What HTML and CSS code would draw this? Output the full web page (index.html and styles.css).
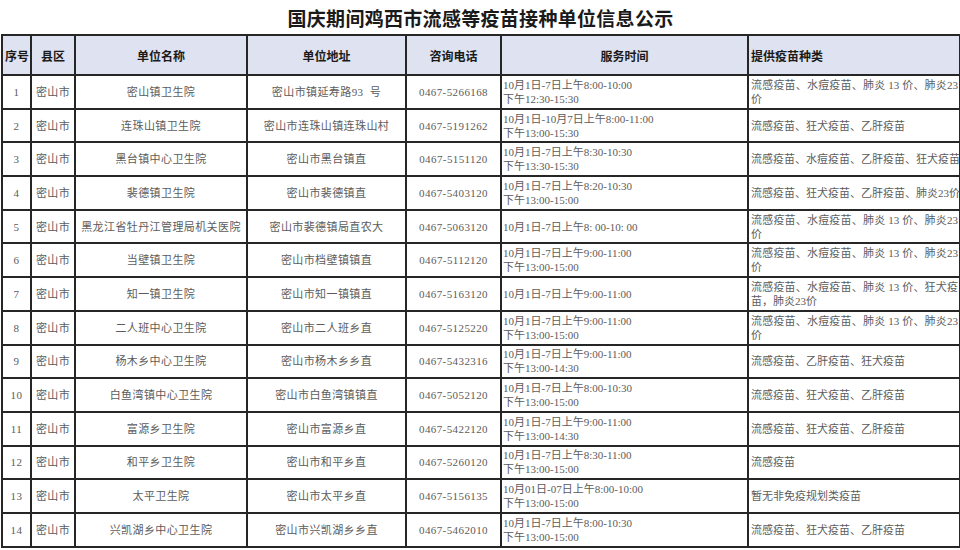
FILE: index.html
```html
<!DOCTYPE html>
<html lang="zh-CN">
<head>
<meta charset="utf-8">
<title>国庆期间鸡西市流感等疫苗接种单位信息公示</title>
<link rel="stylesheet" href="styles.css">
</head>
<body>
<div class="page">
  <h1 class="title">国庆期间鸡西市流感等疫苗接种单位信息公示</h1>
  <table class="sheet">
    <colgroup>
      <col class="c-no"><col class="c-county"><col class="c-name"><col class="c-addr"><col class="c-tel"><col class="c-time"><col class="c-vac">
    </colgroup>
    <thead>
      <tr>
        <th>序号</th><th>县区</th><th>单位名称</th><th>单位地址</th><th>咨询电话</th><th>服务时间</th><th class="left">提供疫苗种类</th>
      </tr>
    </thead>
    <tbody>
      <tr>
        <td>1</td><td>密山市</td><td>密山镇卫生院</td><td>密山市镇延寿路93&nbsp;&nbsp;号</td><td>0467-5266168</td>
        <td class="time">10月1日-7日上午8:00-10:00<br>下午12:30-15:30</td>
        <td class="vac"><span class="jl">流感疫苗、水痘疫苗、肺炎 13 价、肺炎23</span>价</td>
      </tr>
      <tr>
        <td>2</td><td>密山市</td><td>连珠山镇卫生院</td><td>密山市连珠山镇连珠山村</td><td>0467-5191262</td>
        <td class="time">10月1日-10月7日上午8:00-11:00<br>下午13:00-15:30</td>
        <td class="vac">流感疫苗、狂犬疫苗、乙肝疫苗</td>
      </tr>
      <tr>
        <td>3</td><td>密山市</td><td>黑台镇中心卫生院</td><td>密山市黑台镇直</td><td>0467-5151120</td>
        <td class="time">10月1日-7日上午8:30-10:30<br>下午13:30-15:30</td>
        <td class="vac"><span class="jl">流感疫苗、水痘疫苗、乙肝疫苗、狂犬疫苗</span></td>
      </tr>
      <tr>
        <td>4</td><td>密山市</td><td>裴德镇卫生院</td><td>密山市裴德镇直</td><td>0467-5403120</td>
        <td class="time">10月1日-7日上午8:20-10:30<br>下午13:00-15:00</td>
        <td class="vac"><span class="jl">流感疫苗、狂犬疫苗、乙肝疫苗、肺炎23价</span></td>
      </tr>
      <tr>
        <td>5</td><td>密山市</td><td>黑龙江省牡丹江管理局机关医院</td><td>密山市裴德镇局直农大</td><td>0467-5063120</td>
        <td class="time">10月1日-7日上午8:&nbsp;00-10:&nbsp;00</td>
        <td class="vac"><span class="jl">流感疫苗、水痘疫苗、肺炎 13 价、肺炎23</span>价</td>
      </tr>
      <tr>
        <td>6</td><td>密山市</td><td>当壁镇卫生院</td><td>密山市档壁镇镇直</td><td>0467-5112120</td>
        <td class="time">10月1日-7日上午9:00-11:00<br>下午13:00-15:00</td>
        <td class="vac"><span class="jl">流感疫苗、水痘疫苗、肺炎 13 价、肺炎23</span>价</td>
      </tr>
      <tr>
        <td>7</td><td>密山市</td><td>知一镇卫生院</td><td>密山市知一镇镇直</td><td>0467-5163120</td>
        <td class="time">10月1日-7日上午9:00-11:00</td>
        <td class="vac"><span class="jl">流感疫苗、水痘疫苗、肺炎 13 价、狂犬疫</span>苗，肺炎23价</td>
      </tr>
      <tr>
        <td>8</td><td>密山市</td><td>二人班中心卫生院</td><td>密山市二人班乡直</td><td>0467-5125220</td>
        <td class="time">10月1日-7日上午9:00-11:00<br>下午13:00-15:00</td>
        <td class="vac"><span class="jl">流感疫苗、水痘疫苗、肺炎 13 价、肺炎23</span>价</td>
      </tr>
      <tr>
        <td>9</td><td>密山市</td><td>杨木乡中心卫生院</td><td>密山市杨木乡乡直</td><td>0467-5432316</td>
        <td class="time">10月1日-7日上午9:00-11:00<br>下午13:00-14:30</td>
        <td class="vac">流感疫苗、乙肝疫苗、狂犬疫苗</td>
      </tr>
      <tr>
        <td>10</td><td>密山市</td><td>白鱼湾镇中心卫生院</td><td>密山市白鱼湾镇镇直</td><td>0467-5052120</td>
        <td class="time">10月1日-7日上午8:00-10:30<br>下午13:00-15:00</td>
        <td class="vac">流感疫苗、狂犬疫苗、乙肝疫苗</td>
      </tr>
      <tr>
        <td>11</td><td>密山市</td><td>富源乡卫生院</td><td>密山市富源乡直</td><td>0467-5422120</td>
        <td class="time">10月1日-7日上午9:00-11:00<br>下午13:00-14:30</td>
        <td class="vac">流感疫苗、狂犬疫苗、乙肝疫苗</td>
      </tr>
      <tr>
        <td>12</td><td>密山市</td><td>和平乡卫生院</td><td>密山市和平乡直</td><td>0467-5260120</td>
        <td class="time">10月1日-7日上午8:30-11:00<br>下午13:00-15:00</td>
        <td class="vac">流感疫苗</td>
      </tr>
      <tr>
        <td>13</td><td>密山市</td><td>太平卫生院</td><td>密山市太平乡直</td><td>0467-5156135</td>
        <td class="time">10月01日-07日上午8:00-10:00<br>下午13:00-15:00</td>
        <td class="vac">暂无非免疫规划类疫苗</td>
      </tr>
      <tr>
        <td>14</td><td>密山市</td><td>兴凯湖乡中心卫生院</td><td>密山市兴凯湖乡乡直</td><td>0467-5462010</td>
        <td class="time">10月1日-7日上午8:00-10:30<br>下午13:00-15:00</td>
        <td class="vac">流感疫苗、狂犬疫苗、乙肝疫苗</td>
      </tr>
    </tbody>
  </table>
</div>
</body>
</html>
```

FILE: styles.css
```css
html, body {
  margin: 0;
  padding: 0;
  background: #ffffff;
}

.page {
  width: 960px;
  height: 550px;
  overflow: hidden;
  padding: 0 0 0 1px;
  box-sizing: border-box;
}

.title {
  margin: 0;
  height: 34px;
  display: flex;
  align-items: center;
  justify-content: center;
  font-family: "Liberation Serif", "Noto Sans CJK SC", serif;
  font-size: 19px;
  font-weight: 700;
  letter-spacing: 0.3px;
  color: #1a1a1a;
}

.sheet {
  width: 958px;
  border-collapse: collapse;
  table-layout: fixed;
  font-family: "Liberation Serif", "Noto Sans CJK SC", serif;
  font-size: 11px;
  color: #5c5c5c;
}

.c-no { width: 29px; }
.c-county { width: 44px; }
.c-name { width: 172px; }
.c-addr { width: 159px; }
.c-tel { width: 95px; }
.c-time { width: 247px; }
.c-vac { width: 212px; }

.sheet th,
.sheet td {
  border: 2px solid #262626;
  padding: 0 2px;
  text-align: center;
  vertical-align: middle;
  white-space: nowrap;
  overflow: hidden;
}

.sheet th {
  height: 38px;
  background: #dfe3f1;
  font-family: "Noto Sans CJK SC", sans-serif;
  font-weight: 700;
  font-size: 12px;
  color: #1a1a1a;
}

.sheet th.left {
  text-align: left;
}

.sheet td {
  height: 31.7px;
  line-height: 14px;
  letter-spacing: 0.4px;
}

.sheet td.time {
  text-align: left;
  padding-left: 1px;
  letter-spacing: 0;
}

.sheet td.vac {
  text-align: left;
  padding: 0 1px 0 2px;
  letter-spacing: 0;
}

.jl {
  display: block;
  text-align: justify;
  text-align-last: justify;
}
```
